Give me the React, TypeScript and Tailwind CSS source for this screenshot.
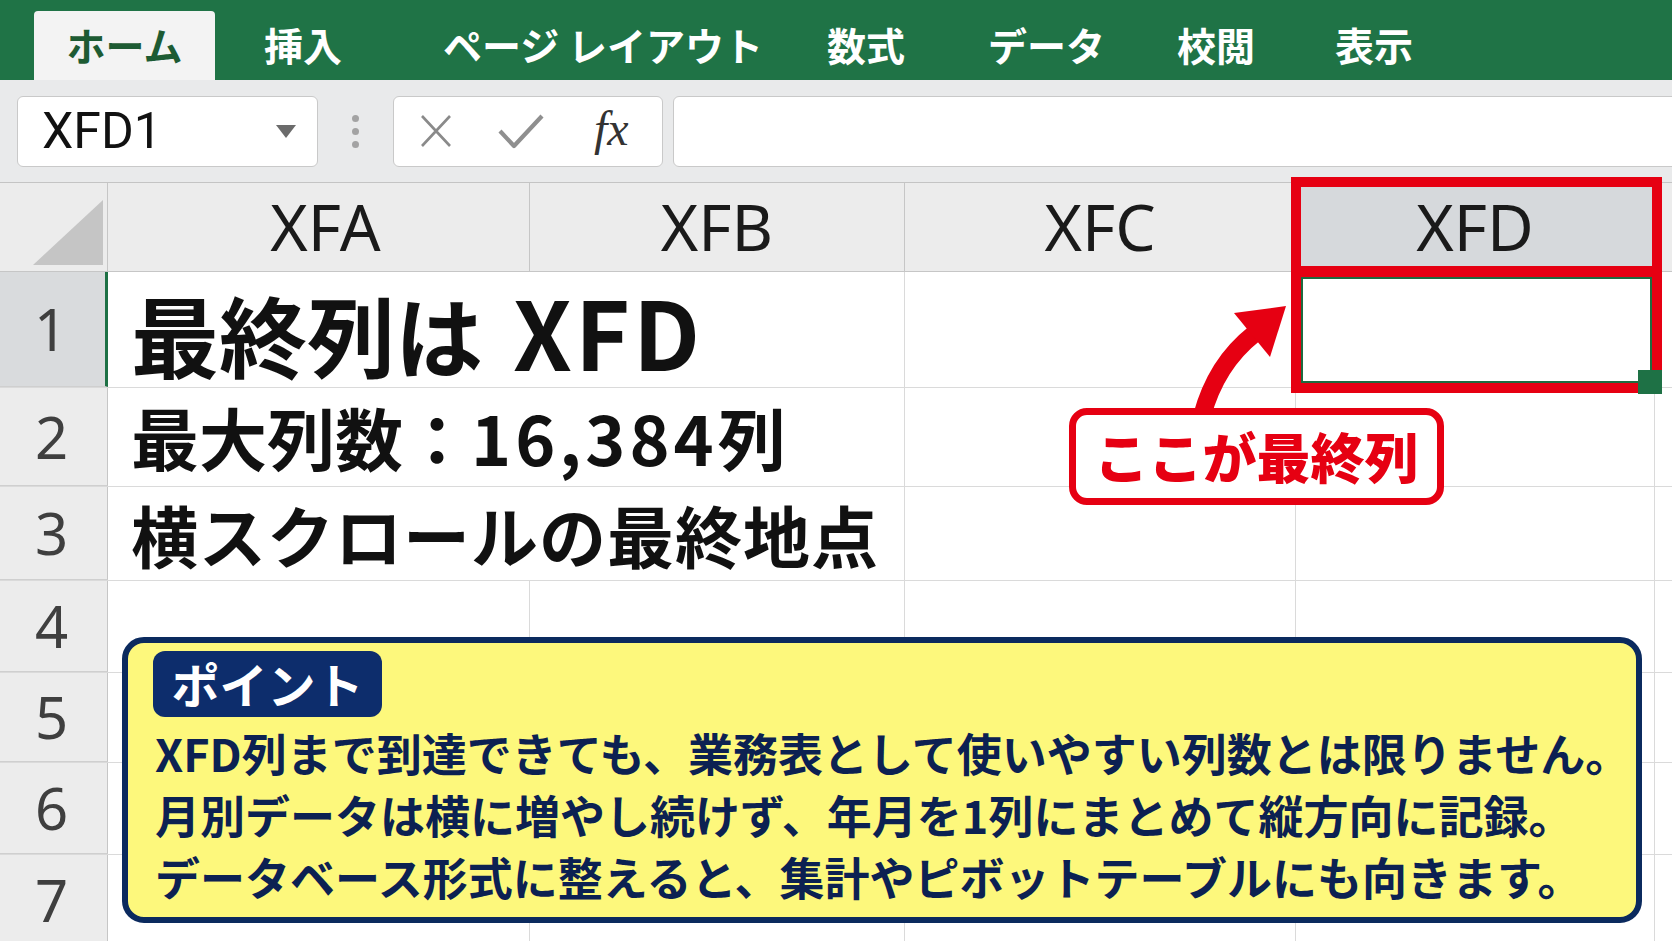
import React from 'react';

const tabs = [
  { label: '挿入', w: 'w-[179px]' },
  { label: 'ページ レイアウト', w: 'w-[384px]' },
  { label: '数式', w: 'w-[161px]' },
  { label: 'データ', w: 'w-[189px]' },
  { label: '校閲', w: 'w-[158px]' },
  { label: '表示', w: 'w-[200px]' },
];

const rows: { n: number; h: string; text?: React.ReactNode; size?: string }[] = [
  {
    n: 1,
    h: 'h-[116px]',
    text: (
      <>
        最終列は<span className="ml-[30px] text-[94px] tracking-[3px]">XFD</span>
      </>
    ),
    size: 'text-[88px]',
  },
  {
    n: 2,
    h: 'h-[99px]',
    text: (
      <>
        最大列数：<span className="tracking-[4px]">16,384</span>列
      </>
    ),
    size: 'text-[68px]',
  },
  { n: 3, h: 'h-[94px]', text: <span className="tracking-[1px]">横スクロールの最終地点</span>, size: 'text-[67px]' },
  { n: 4, h: 'h-[92px]' },
  { n: 5, h: 'h-[90px]' },
  { n: 6, h: 'h-[92px]' },
  { n: 7, h: 'h-[92px]' },
];

function Ribbon() {
  return (
    <div className="h-[80px] bg-[#1f7346] flex font-['Noto_Sans_CJK_JP',sans-serif] font-bold text-[39px] leading-none">
      <div className="self-end ml-[34px] w-[181px] h-[69px] bg-[#f3f3f3] rounded-t-[4px] flex items-center justify-center text-[#1d5b33] pb-[2px]">
        ホーム
      </div>
      <div className="w-[49px]" />
      {tabs.map((t) => (
        <div key={t.label} className={`self-end h-[69px] flex items-center pb-[2px] text-white whitespace-nowrap shrink-0 ${t.w}`}>
          {t.label}
        </div>
      ))}
    </div>
  );
}

function FormulaBar() {
  return (
    <div className="h-[103px] bg-[#e9eaeb] border-b border-[#c4c4c4] flex items-center pl-[17px]">
      {/* name box */}
      <div className="w-[301px] h-[71px] shrink-0 bg-white border border-[#c9c9c9] rounded-[6px] flex items-center pl-[24px] pr-[21px]">
        <span className="flex-1 font-['Roboto',sans-serif] text-[50px] leading-none text-[#111]">XFD1</span>
        <svg width="20" height="13" viewBox="0 0 20 13">
          <polygon points="0,0 20,0 10,13" fill="#6b6b6b" />
        </svg>
      </div>
      <div className="w-[75px] shrink-0 flex flex-col items-center gap-[6px]">
        <span className="w-[7px] h-[7px] rounded-full bg-[#a3a3a3]" />
        <span className="w-[7px] h-[7px] rounded-full bg-[#a3a3a3]" />
        <span className="w-[7px] h-[7px] rounded-full bg-[#a3a3a3]" />
      </div>
      {/* cancel / enter / fx */}
      <div className="w-[270px] h-[71px] shrink-0 bg-white border border-[#c9c9c9] rounded-[6px] flex items-center">
        <svg className="ml-[26px]" width="32" height="34" viewBox="0 0 32 34">
          <path d="M2 2 L30 32 M30 2 L2 32" stroke="#8a8a8a" strokeWidth="2.6" fill="none" />
        </svg>
        <svg className="ml-[46px]" width="46" height="36" viewBox="0 0 46 36">
          <path d="M2 18 L16 33 L44 3" stroke="#8f8f8f" strokeWidth="4.2" fill="none" strokeLinejoin="round" />
        </svg>
        <span className="ml-[50px] font-['Liberation_Serif',serif] italic text-[48px] leading-none text-[#333] pb-[4px]">fx</span>
      </div>
      <div className="ml-[10px] flex-1 -mr-[12px] h-[71px] bg-white border border-[#c9c9c9] rounded-[6px]" />
    </div>
  );
}

function HeaderRow() {
  const cell = 'shrink-0 h-full border-r border-[#c6c6c6] flex items-center justify-center';
  return (
    <div className="h-[89px] flex bg-[#ececec] border-b border-[#c6c6c6] font-['Noto_Sans',sans-serif] text-[64px] leading-none text-[#1a1a1a]">
      <div className={`w-[108px] ${cell} relative`}>
        <svg className="absolute left-0 top-0" width="108" height="89" viewBox="0 0 108 89">
          <polygon points="33,82 103,17 103,82" fill="#c5c5c5" />
        </svg>
      </div>
      <div className={`w-[422px] ${cell} pl-[14px]`}>XFA</div>
      <div className={`w-[375px] ${cell}`}>XFB</div>
      <div className={`w-[391px] ${cell}`}>XFC</div>
      <div className={`w-[359px] ${cell} bg-[#d6d9dc]`}>XFD</div>
      <div className="flex-1" />
    </div>
  );
}

function DataRow({ r }: { r: (typeof rows)[number] }) {
  const cell = 'shrink-0 h-full border-r border-[#dadada]';
  const first = r.n === 1;
  return (
    <div className={`${r.h} flex border-b border-[#dadada] bg-white`}>
      <div
        className={`w-[108px] shrink-0 h-full border-b border-[#cfcfcf] -mb-px flex items-center justify-center pr-[4px] font-['Noto_Sans',sans-serif] text-[58px] leading-none text-[#3f3f3f] ${
          first ? 'bg-[#d9dbdd] border-r-[3px] border-r-[#1e7145]' : 'bg-[#ececec] border-r border-r-[#c6c6c6]'
        }`}
      >
        {r.n}
      </div>
      {r.text ? (
        <div className={`w-[797px] ${cell} flex items-center pl-[23px] whitespace-nowrap font-['Noto_Sans_CJK_JP',sans-serif] font-bold leading-none text-[#111] ${r.size}`}>
          <span>{r.text}</span>
        </div>
      ) : (
        <>
          <div className={`w-[422px] ${cell}`} />
          <div className={`w-[375px] ${cell}`} />
        </>
      )}
      <div className={`w-[391px] ${cell}`} />
      <div className={`w-[359px] ${cell}`} />
      <div className="flex-1" />
    </div>
  );
}

export default function App() {
  return (
    <div className="relative w-[1672px] h-[941px] overflow-hidden bg-white">
      <Ribbon />
      <FormulaBar />
      <HeaderRow />
      {rows.map((r) => (
        <DataRow key={r.n} r={r} />
      ))}

      {/* red frame round the last column */}
      <div className="absolute left-[1291px] top-[177px] w-[371px] h-[216px] border-[10px] border-[#e60012]">
        <div className="absolute left-0 right-0 top-[79px] h-[11px] bg-[#e60012]" />
        <div className="absolute left-0 right-0 top-[90px] bottom-0 border-2 border-[#1e6b3f]" />
      </div>
      <div className="absolute left-[1638px] top-[370px] w-[24px] h-[24px] bg-[#1e7145]" />

      {/* arrow */}
      <svg className="absolute left-0 top-0 pointer-events-none" width="1672" height="941" viewBox="0 0 1672 941">
        <path d="M1202 416 Q1216 364 1254 334" stroke="#e60012" strokeWidth="18" fill="none" />
        <polygon points="1286,306 1234,313 1270,357" fill="#e60012" />
      </svg>

      {/* callout */}
      <div className="absolute left-[1069px] top-[408px] w-[375px] h-[97px] bg-white border-[7px] border-[#e60012] rounded-[18px] flex items-center justify-center font-['Noto_Sans_CJK_JP',sans-serif] font-black text-[54px] leading-none text-[#e60012] pb-[2px]">
        ここが最終列
      </div>

      {/* point box */}
      <div className="absolute left-[122px] top-[637px] w-[1520px] h-[286px] bg-[#fdf87c] border-[6px] border-[#0b2a5e] rounded-[22px] pl-[25px] pt-[8px] font-['Noto_Sans_CJK_JP',sans-serif] font-bold text-[#0c2152]">
        <div className="w-[229px] h-[66px] rounded-[12px] bg-[#0d2d6c] flex items-center justify-center text-white text-[48px] leading-none pb-[2px]">
          ポイント
        </div>
        <div className="mt-[5px] pl-[2px] text-[45px] leading-[62px] whitespace-nowrap">
          <div>XFD列まで到達できても、業務表として使いやすい列数とは限りません。</div>
          <div>月別データは横に増やし続けず、年月を1列にまとめて縦方向に記録。</div>
          <div>データベース形式に整えると、集計やピボットテーブルにも向きます。</div>
        </div>
      </div>
    </div>
  );
}
